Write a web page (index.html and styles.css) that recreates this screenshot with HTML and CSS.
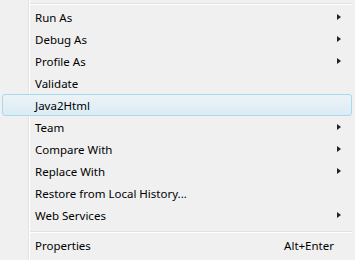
FILE: index.html
```html
<!DOCTYPE html>
<html>
<head>
<meta charset="utf-8">
<link rel="stylesheet" href="styles.css">
</head>
<body>
<div class="menu">
  <div class="sep sep-top"></div>
  <div class="item"><span class="label">Run As</span><span class="arrow"></span></div>
  <div class="item"><span class="label">Debug As</span><span class="arrow"></span></div>
  <div class="item"><span class="label">Profile As</span><span class="arrow"></span></div>
  <div class="item"><span class="label">Validate</span></div>
  <div class="item hover"><span class="label">Java2Html</span></div>
  <div class="item"><span class="label">Team</span><span class="arrow"></span></div>
  <div class="item"><span class="label">Compare With</span><span class="arrow"></span></div>
  <div class="item"><span class="label">Replace With</span><span class="arrow"></span></div>
  <div class="item"><span class="label">Restore from Local History...</span></div>
  <div class="item"><span class="label">Web Services</span><span class="arrow"></span></div>
  <div class="sep sep-bottom"></div>
  <div class="item"><span class="label">Properties</span><span class="shortcut">Alt+Enter</span></div>
</div>
</body>
</html>
```
FILE: styles.css
```css
html, body {
  margin: 0;
  padding: 0;
  background: #f0f0f0;
}
.menu {
  width: 355px;
  height: 258px;
  border-bottom: 2px solid #a0a0a0;
  box-sizing: content-box;
  padding-top: 3px;
  background-color: #f0f0f0;
  background-image: linear-gradient(to right, transparent 28px, #e2e3e3 28px, #e2e3e3 29px, #ffffff 29px, #ffffff 30px, transparent 30px);
  font-family: "Noto Sans", "Segoe UI", sans-serif;
  font-size: 11.5px;
  color: #000;
  display: flex;
  flex-direction: column;
}
.sep {
  height: 1px;
  border-top: 1px solid #e2e3e3;
  background: #fff;
  margin-left: 30px;
  margin-right: 3px;
}
.sep-top { margin-bottom: 1px; }
.sep-bottom { margin-top: 5px; margin-bottom: 1px; }
.item {
  height: 22px;
  margin: 0 3px 0 2px;
  padding: 0 10px 0 32px;
  display: flex;
  align-items: center;
  box-sizing: border-box;
  border: 1px solid transparent;
  border-radius: 3px;
}
.item .label { flex: 1; white-space: nowrap; }
.item .shortcut { margin-right: 7px; }
.item.hover {
  background: linear-gradient(to bottom, #ecf3f7, #dbecf4);
  border-color: #a9d9ee;
}
.arrow {
  width: 0;
  height: 0;
  border-top: 3.5px solid transparent;
  border-bottom: 3.5px solid transparent;
  border-left: 4px solid #222;
}
```
